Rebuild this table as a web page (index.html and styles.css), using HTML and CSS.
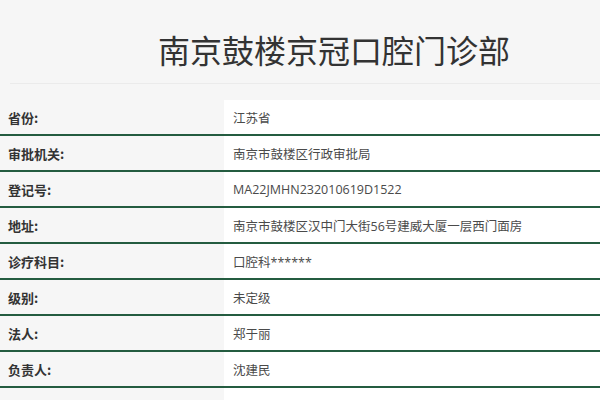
FILE: index.html
```html
<!DOCTYPE html>
<html lang="zh-CN">
<head>
<meta charset="utf-8">
<link rel="stylesheet" href="styles.css">
</head>
<body>
<div class="page">
  <header class="head">
    <h1 class="title">南京鼓楼京冠口腔门诊部</h1>
  </header>
  <div class="info">
    <div class="row"><div class="label">省份:</div><div class="value">江苏省</div></div>
    <div class="row"><div class="label">审批机关:</div><div class="value">南京市鼓楼区行政审批局</div></div>
    <div class="row"><div class="label">登记号:</div><div class="value">MA22JMHN232010619D1522</div></div>
    <div class="row"><div class="label">地址:</div><div class="value">南京市鼓楼区汉中门大街56号建威大厦一层西门面房</div></div>
    <div class="row"><div class="label">诊疗科目:</div><div class="value">口腔科******</div></div>
    <div class="row"><div class="label">级别:</div><div class="value">未定级</div></div>
    <div class="row"><div class="label">法人:</div><div class="value">郑于丽</div></div>
    <div class="row"><div class="label">负责人:</div><div class="value">沈建民</div></div>
    <div class="row row-empty"><div class="label"></div><div class="value"></div></div>
  </div>
</div>
</body>
</html>
```
FILE: styles.css
```css
html, body {
  margin: 0;
  padding: 0;
  background: #f6f6f6;
}
body {
  font-family: "Noto Sans CJK SC", sans-serif;
  color: #333;
}
.page {
  width: 600px;
  height: 400px;
  overflow: hidden;
}
.head {
  margin-left: 10px;
  border-bottom: 1px solid #ebebeb;
  padding: 30px 0 15px 0;
}
.title {
  margin: 0;
  padding-left: 148px;
  font-size: 32px;
  font-weight: 400;
  line-height: 38px;
  color: #333;
  font-family: "Noto Sans CJK SC", sans-serif;
}
.info {
  margin-top: 16px;
}
.row {
  display: grid;
  grid-template-columns: 224px 1fr;
  height: 34px;
  border-bottom: 2px solid #245c40;
}
.label {
  display: flex;
  align-items: center;
  padding-left: 8px;
  font-size: 13px;
  font-weight: 700;
  color: #333;
  background: #f6f6f6;
  font-family: "Noto Sans CJK SC", sans-serif;
}
.value {
  display: flex;
  align-items: center;
  padding-left: 9px;
  font-size: 12.5px;
  color: #4a4a4a;
  background: #fff;
  font-family: "Open Sans", "Noto Sans CJK SC", sans-serif;
}
```
